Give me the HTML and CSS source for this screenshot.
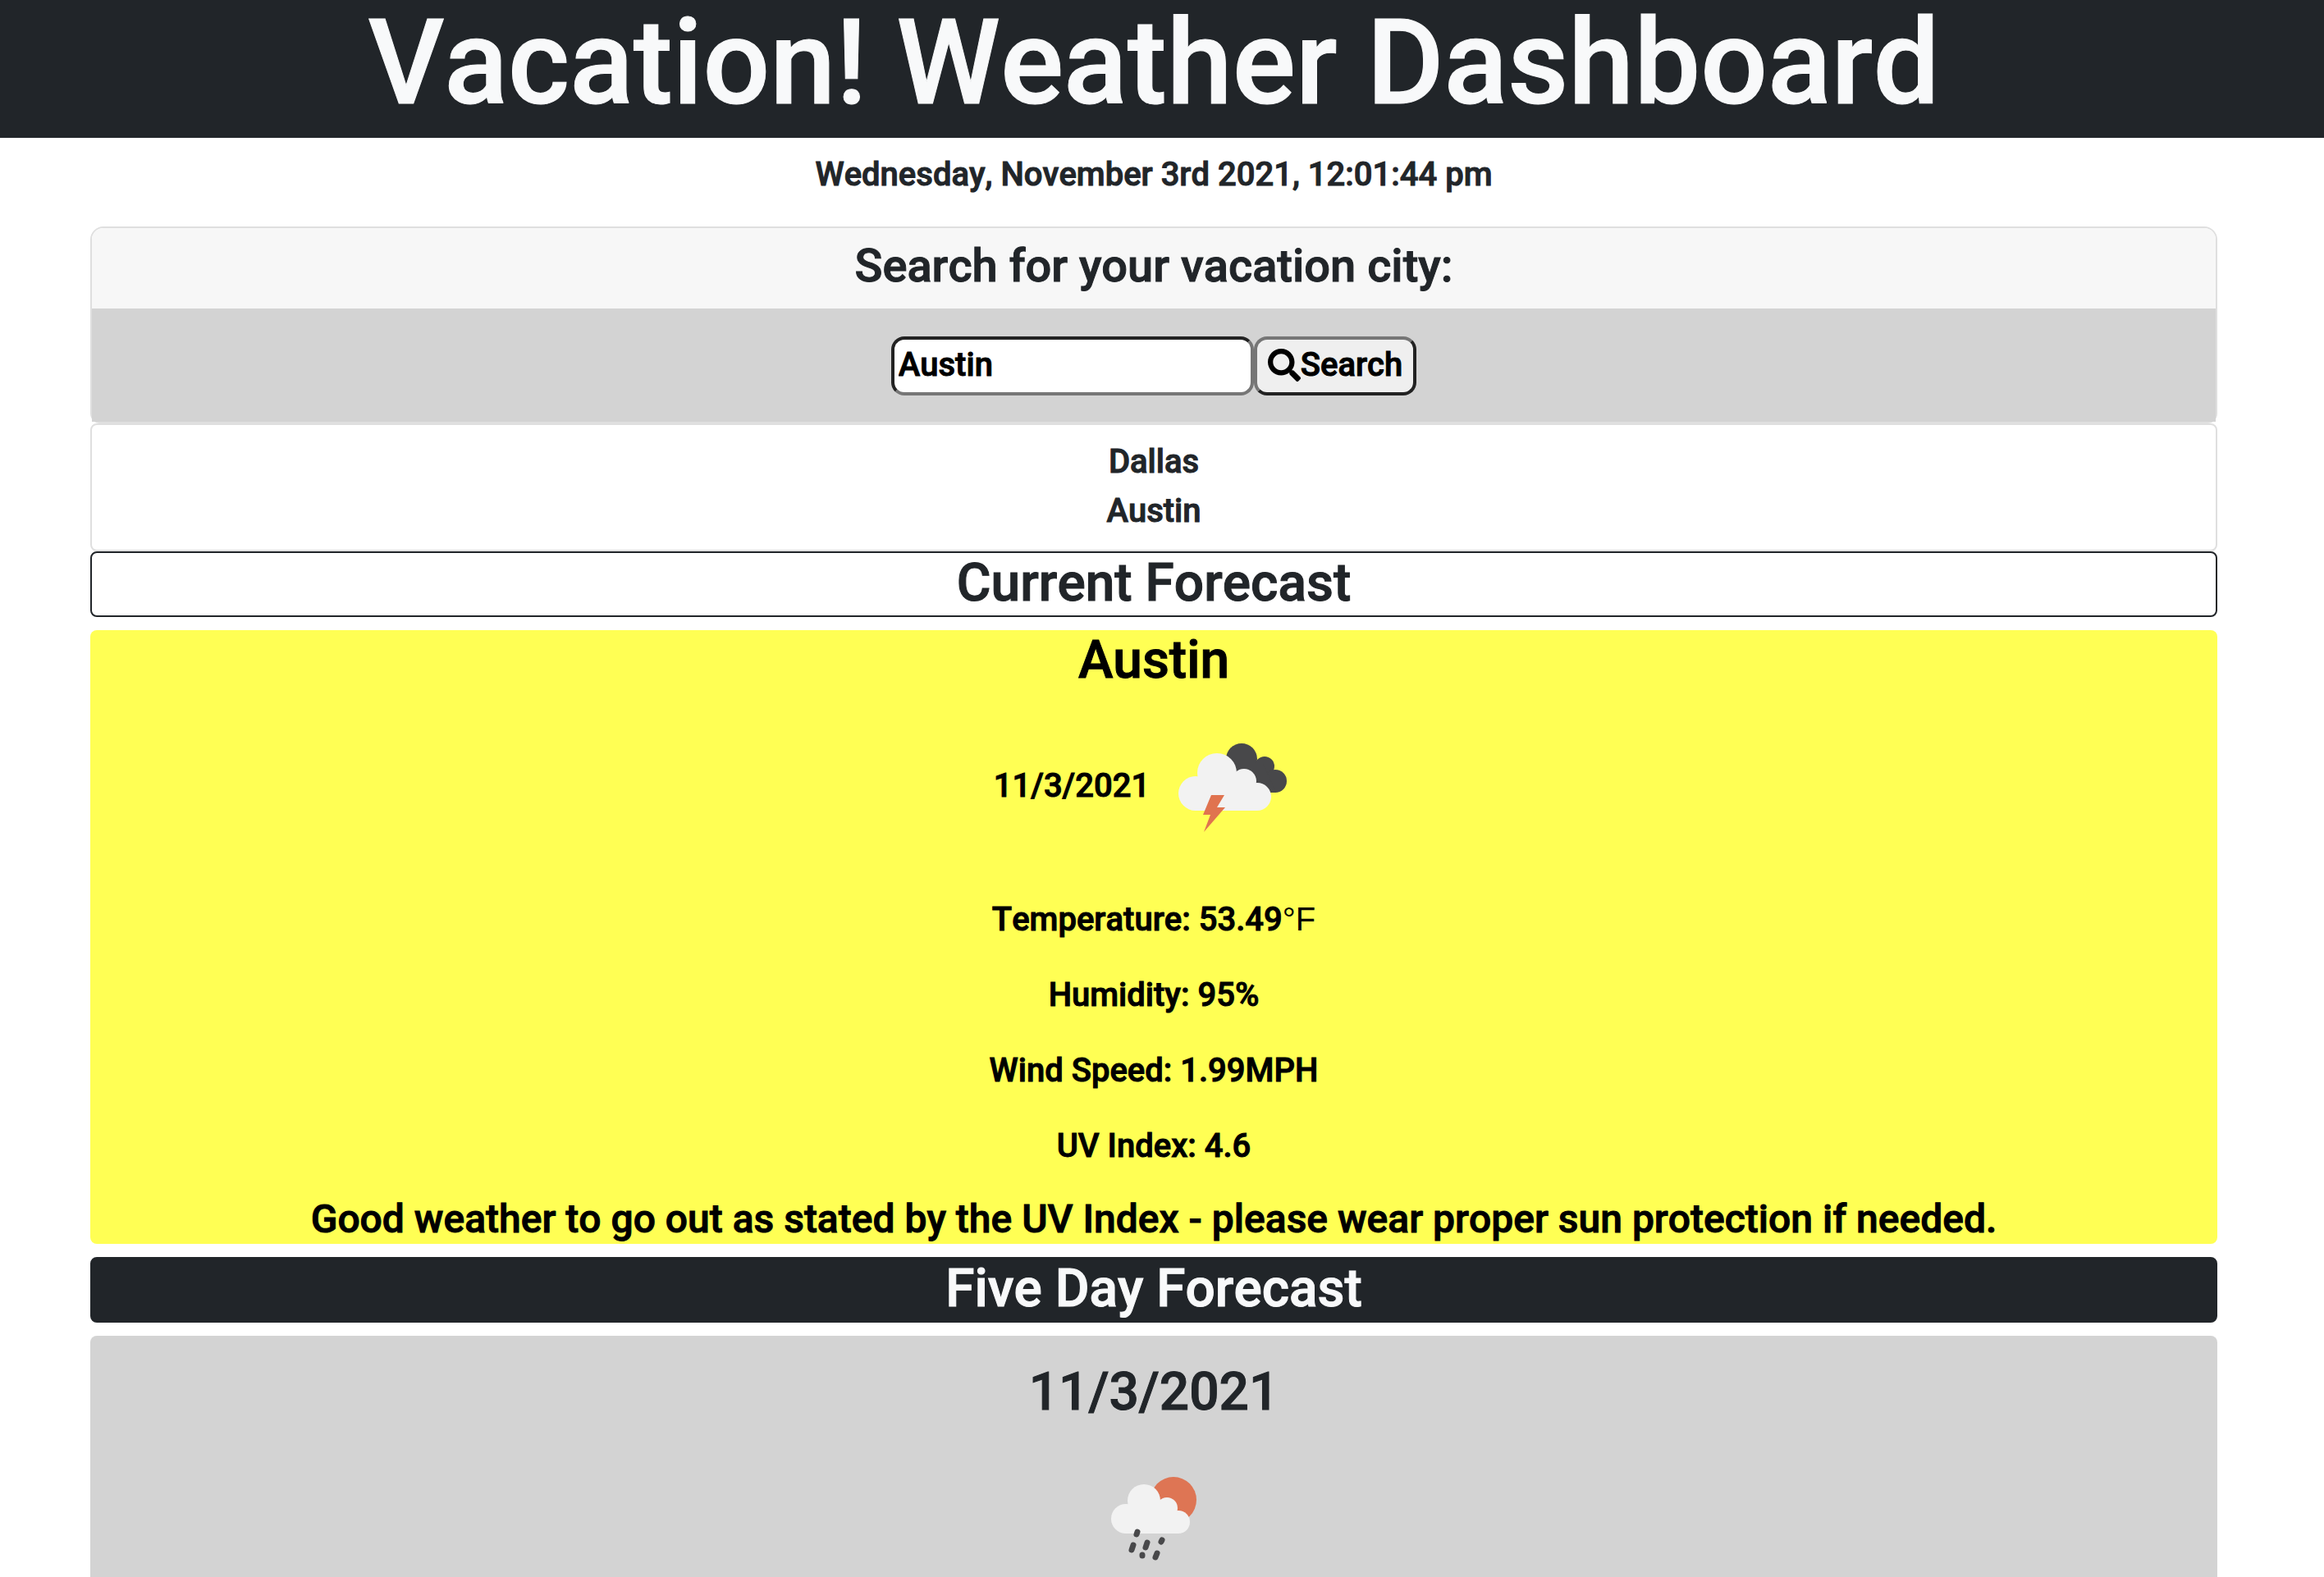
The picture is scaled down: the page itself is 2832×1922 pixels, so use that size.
FILE: index.html
```html
<!DOCTYPE html>
<html lang="en">
<head>
<meta charset="utf-8">
<title>Vacation! Weather Dashboard</title>
<link rel="stylesheet" href="styles.css">
</head>
<body>
<header class="banner">
  <h1 class="banner-title">Vacation! Weather Dashboard</h1>
</header>
<main class="page">
  <p class="clock">Wednesday, November 3rd 2021, 12:01:44 pm</p>
  <div class="container">
    <section class="card search-card">
      <h3 class="card-header"><label for="city">Search for your vacation city:</label></h3>
      <form class="card-body">
        <input class="city-input" id="city" type="text" value="Austin">
        <button class="search-button" type="button">
          <svg class="search-icon" viewBox="0 0 512 512" aria-hidden="true"><path d="M505 442.700 405.300 343c-4.500-4.500-10.600-7-17-7H372c27.600-35.300 44-79.700 44-128C416 93.100 322.900 0 208 0S0 93.100 0 208s93.100 208 208 208c48.300 0 92.700-16.400 128-44v16.300c0 6.400 2.500 12.500 7 17l99.700 99.700c9.400 9.400 24.600 9.400 33.900 0l28.300-28.300c9.400-9.400 9.400-24.600.1-34zM208 336c-70.700 0-128-57.200-128-128 0-70.700 57.200-128 128-128 70.700 0 128 57.200 128 128 0 70.700-57.200 128-128 128z"/></svg>Search
        </button>
      </form>
    </section>
    <ul class="history">
      <li>Dallas</li>
      <li>Austin</li>
    </ul>
    <h2 class="section-title">Current Forecast</h2>
    <section class="current">
      <h2 class="city-name">Austin</h2>
      <div class="conditions">
        <span>11/3/2021</span>
        <svg class="weather-icon" viewBox="0 0 200 200" role="img" aria-label="Thunderstorm">
          <g fill="#48484a"><circle cx="112" cy="67" r="19"/><circle cx="140" cy="76" r="12"/><circle cx="153" cy="94" r="14"/><path d="M98 72h40l16 36h-20z"/></g>
          <g fill="#f2f2f2"><circle cx="56" cy="109" r="21"/><circle cx="82" cy="84" r="24"/><circle cx="115" cy="94" r="15"/><circle cx="131" cy="113" r="17"/><path d="M56 92h59l16 20v18H56z"/></g>
          <path fill="#e0734f" d="M75 111h16l-9 15h10l-26 30 8-21h-9z"/>
        </svg>
      </div>
      <p class="stat">Temperature: 53.49<span class="unit">°F</span></p>
      <p class="stat">Humidity: 95%</p>
      <p class="stat">Wind Speed: 1.99MPH</p>
      <p class="stat">UV Index: 4.6</p>
      <h4 class="advice">Good weather to go out as stated by the UV Index - please wear proper sun protection if needed.</h4>
    </section>
    <h2 class="section-title section-title-dark">Five Day Forecast</h2>
    <section class="day">
      <h2 class="day-date">11/3/2021</h2>
      <svg class="weather-icon" viewBox="0 0 200 200" role="img" aria-label="Rain with sun">
        <circle cx="124" cy="82" r="28" fill="#de7554"/>
        <g fill="#f2f2f2"><circle cx="66" cy="105" r="18"/><circle cx="88" cy="83" r="20"/><circle cx="116" cy="92" r="13"/><circle cx="130" cy="109" r="14"/><path d="M66 89h50l14 15v19H66z"/></g>
        <g stroke="#48484a" stroke-width="7" stroke-linecap="round"><path d="M80 121l-1 3M75 137l-2 6M92 134l-2 6M110 131l-1 2M86 149v1M104 147l-2 5"/></g>
      </svg>
    </section>
  </div>
</main>
</body>
</html>
```
FILE: styles.css
```css
:root {
  --gutter: 20px;
  --ink: #212529;
  --line: #dfdfdf;
  --grey: #d3d3d3;
}

* {
  box-sizing: border-box;
}

body {
  margin: 0;
  background: #fff;
  color: var(--ink);
  font: 500 40px/60px Roboto, sans-serif;
  font-kerning: none;
  -webkit-text-stroke: 1px;
  text-align: center;
}

h1, h2, h3, h4, p, ul {
  margin: 0;
  padding: 0;
  font-weight: 500;
}

.banner {
  padding: 0 var(--gutter) 14px 0;
  background: var(--ink);
}

.banner-title {
  color: #f8f9fa;
  font-size: 144px;
  line-height: 154px;
}

.page {
  padding-right: var(--gutter);
}

.clock {
  padding: 15px 0 33px;
}

.container {
  max-width: 2640px;
  margin: 0 auto;
  padding: 0 24px;
}

.search-card {
  border: 2px solid var(--line);
  border-radius: 16px 16px 12px 12px;
}

.card-header {
  padding: 12px 0 18px;
  border-radius: 14px 14px 0 0;
  background: #f7f7f7;
  font-size: 56px;
  line-height: 68px;
}

.card-body {
  display: flex;
  justify-content: center;
  padding: 34px 0 32px;
  background: var(--grey);
}

.city-input,
.search-button {
  height: 72px;
  border: 4px solid;
  border-radius: 16px;
  color: #000;
  font: inherit;
  font-kerning: none;
}

.city-input {
  width: 442px;
  padding: 0 5px 3px;
  border-color: #222 #767676 #767676 #222;
  background: #fff;
}

.search-button {
  display: flex;
  align-items: center;
  padding: 0 13px 2px;
  border-color: #767676 #222 #222 #767676;
  background: #efefef;
}

.search-icon {
  width: 40px;
  height: 40px;
}

.history {
  padding: 15px 0 17px;
  border: 2px solid var(--line);
  border-radius: 8px;
  list-style: none;
}

.section-title {
  margin-bottom: 16px;
  padding-bottom: 2px;
  border: 2px solid var(--ink);
  border-radius: 8px;
  font-size: 64px;
  line-height: 74px;
}

.section-title-dark {
  background: var(--ink);
  color: #f8f9fa;
}

.current {
  margin-bottom: 16px;
  border-radius: 8px;
  background: #ffff54;
  color: #000;
}

.city-name {
  padding-bottom: 16px;
  font-size: 64px;
  line-height: 74px;
}

.conditions {
  display: flex;
  align-items: center;
  justify-content: center;
  margin-bottom: 33px;
}

.weather-icon {
  width: 200px;
  height: 200px;
}

.stat {
  margin-bottom: 32px;
}

.unit {
  font-family: "Liberation Sans", sans-serif;
  font-weight: 400;
  line-height: 1;
  -webkit-text-stroke: 0;
}

.advice {
  padding-bottom: 3px;
  font-size: 48px;
  line-height: 54px;
}

.day {
  padding-top: 32px;
  border-radius: 8px;
  background: var(--grey);
}

.day-date {
  margin-bottom: 12px;
  font-size: 64px;
  line-height: 74px;
}
```
